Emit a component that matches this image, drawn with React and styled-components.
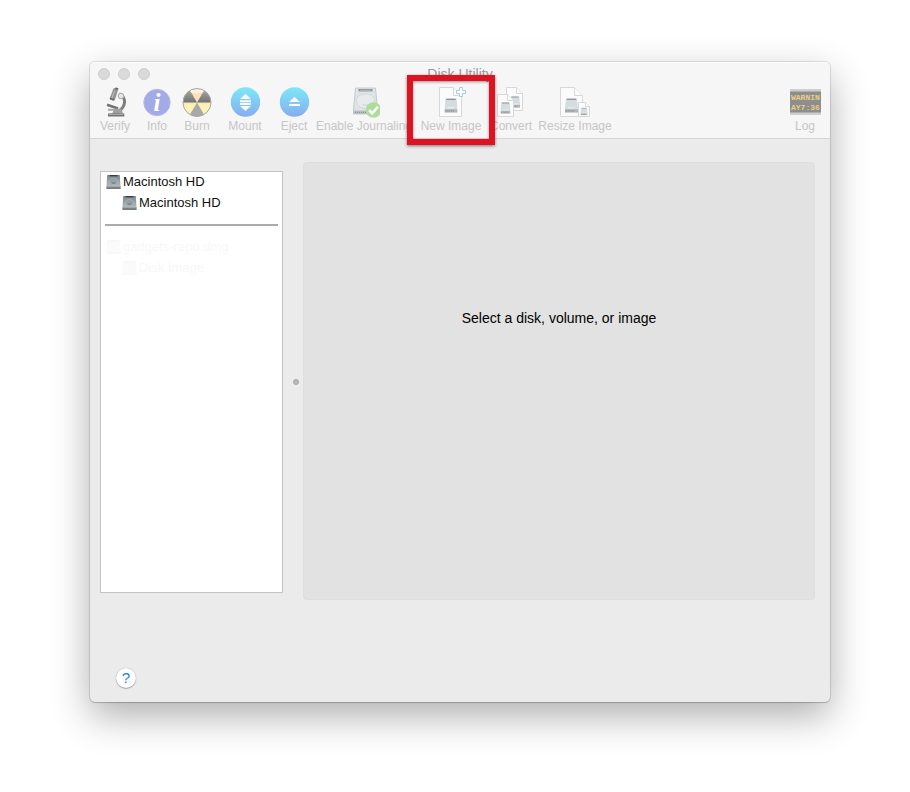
import React from "react";
import styled, { createGlobalStyle } from "styled-components";

const GlobalStyle = createGlobalStyle`
  * { box-sizing: border-box; }
  body {
    margin: 0;
    background: #fff;
    font-family: "Liberation Sans", Arial, Helvetica, sans-serif;
    color: #000;
  }
  button { font-family: inherit; }
`;

const Desktop = styled.div`
  padding: 62px 80px 90px 90px;
`;

const Window = styled.main`
  border-radius: 5px;
  background: #ebebeb;
  box-shadow: 0 0 0 1px rgba(0, 0, 0, 0.1), 0 1px 1px rgba(0, 0, 0, 0.14),
    0 14px 38px rgba(0, 0, 0, 0.32);
`;

const Header = styled.header`
  background: #f6f6f6;
  border-top: 1px solid #fcfcfc;
  border-bottom: 1px solid #d6d6d6;
  border-radius: 5px 5px 0 0;
`;

const TitleBar = styled.div`
  display: grid;
  grid-template-columns: 1fr auto 1fr;
  align-items: center;
  height: 23px;
  padding: 0 8px 2px;
`;

const Lights = styled.div`
  display: flex;
  gap: 8px;
`;

const Light = styled.button`
  width: 12px;
  height: 12px;
  padding: 0;
  border: 1px solid #cfcfcf;
  border-radius: 50%;
  background: #dadada;
`;

const Title = styled.h1`
  margin: 0;
  font-size: 14px;
  line-height: 20px;
  font-weight: 400;
  color: #9a9a9a;
`;

const Toolbar = styled.nav`
  display: flex;
  padding: 0 0 5px 4px;
`;

const Tool = styled.button`
  position: relative;
  display: flex;
  flex-direction: column;
  align-items: center;
  gap: 1px;
  flex: 0 0 ${(p) => p.$width}px;
  margin-left: ${(p) => (p.$end ? "auto" : "0")};
  padding: 0;
  border: 0;
  background: none;
  color: #c6c6c6;
  font-size: 12px;
  line-height: 14px;
  white-space: nowrap;

  svg { display: block; }
`;

const Highlight = styled.span`
  position: absolute;
  inset: -11px -7px -12px;
  z-index: 1;
  border: 6px solid #dd1322;
  box-shadow: 0 1px 3px rgba(0, 0, 0, 0.5), inset 0 1px 3px rgba(0, 0, 0, 0.4);
`;

const Content = styled.div`
  display: grid;
  grid-template-columns: 183px 20px 1fr;
  padding: 23px 15px 0 10px;
`;

const Sidebar = styled.aside`
  margin: 9px 0 7px;
  border: 1px solid #c4c4c4;
  background: #fff;
`;

const List = styled.ul`
  margin: 0;
  padding: 0 4px;
  list-style: none;
`;

const Item = styled.li`
  display: flex;
  align-items: center;
  gap: 2px;
  height: 21px;
  padding: 0 0 2px ${(p) => (p.$nested ? 17 : 1)}px;
  font-size: 13px;
  line-height: 18px;
  color: ${(p) => (p.$faded ? "#f9f7fa" : "#111")};

  svg { flex: none; opacity: ${(p) => (p.$faded ? 0.04 : 1)}; }
`;

const Divider = styled.hr`
  height: 2px;
  margin: 10px 4px 11px;
  border: 0;
  background: #ababab;
`;

const Splitter = styled.div`
  display: flex;
  align-items: center;
  justify-content: center;
  padding: 1px 0 0 5px;
`;

const Grip = styled.span`
  width: 6px;
  height: 6px;
  border: 1px solid #a8a8a8;
  border-radius: 50%;
  background: #b8b8b8;
`;

const Panel = styled.section`
  min-height: 438px;
  padding: 145px 16px 16px;
  border: 1px solid #dedede;
  border-radius: 4px;
  background: #e2e2e2;
  text-align: center;
  font-size: 14px;
  line-height: 20px;
`;

const Message = styled.p`
  margin: 0;
`;

const Footer = styled.footer`
  padding: 68px 26px 14px;
`;

const Help = styled.button`
  display: flex;
  align-items: center;
  justify-content: center;
  width: 20px;
  height: 20px;
  padding: 0;
  border: 0;
  border-radius: 50%;
  background: #fff;
  box-shadow: 0 0 1px rgba(0, 0, 0, 0.35), 0 1px 1px rgba(0, 0, 0, 0.25);
  color: #1a80f5;
  font-size: 15px;
  line-height: 20px;
`;

const PixelText = styled.text`
  font-family: "Liberation Mono", monospace;
  font-size: 8px;
  font-weight: 700;
  fill: #e6cf83;
`;

const InfoLetter = styled.text`
  font-family: "Liberation Serif", serif;
  font-size: 25px;
  font-style: italic;
  font-weight: 700;
  fill: #fff;
`;

const Verify = () => (
  <svg width="32" height="32" viewBox="0 0 32 32" fill="none" aria-hidden="true">
    <path d="M14.5 2.5l3-.9 2 1-3.8 12-5.2-1.8z" fill="#929292" />
    <path d="M15.6 5l-3 8" stroke="#c3c3c3" />
    <path d="M16.5 2.2l2.6.9" stroke="#686868" strokeWidth="1.5" />
    <path d="M11 12.4l4 1.6" stroke="#707070" strokeWidth="2" />
    <path d="M20 7.8c6 2.2 7.5 9.5 2.7 15-1.5 1.8-3.3 3-5.2 4.2" stroke="#7e7e7e" strokeWidth="3" />
    <circle cx="22" cy="10" r="2.8" fill="#e7e7e7" stroke="#a8a8a8" />
    <path d="M8 18.7l11 3.8" stroke="#747474" strokeWidth="2.5" />
    <path d="M9 23.8h8" stroke="#aaa" strokeWidth="2" />
    <path d="M15.5 22.8h7l1.5 5H13z" fill="#a0a0a0" />
    <path d="M9 27.6c5-.9 11-.9 16.3 0v2.9H9z" fill="#777" />
    <path d="M10 28.3h14" stroke="#b4b4b4" />
  </svg>
);

const Info = () => (
  <svg width="32" height="32" viewBox="0 0 32 32" aria-hidden="true">
    <circle cx="16" cy="16.5" r="13.2" fill="#a3abe6" stroke="#b5bbea" />
    <InfoLetter x="16" y="25" textAnchor="middle">i</InfoLetter>
  </svg>
);

const Burn = () => (
  <svg width="32" height="32" viewBox="0 0 32 32" aria-hidden="true">
    <defs>
      <linearGradient id="burnDark" x2="0" y2="1">
        <stop stopColor="#a4a4a4" />
        <stop offset="1" stopColor="#727272" />
      </linearGradient>
      <linearGradient id="burnLight" x2="0" y2="1">
        <stop stopColor="#f9dcb8" />
        <stop offset=".5" stopColor="#fae4b6" />
        <stop offset=".6" stopColor="#fcf3b6" />
        <stop offset="1" stopColor="#fbf0b2" />
      </linearGradient>
    </defs>
    <circle cx="16" cy="16.5" r="14" fill="url(#burnLight)" />
    <path d="M16 16.5H2A14 14 0 0 1 9 4.4zM16 16.5h14A14 14 0 0 0 23 4.4z" fill="url(#burnDark)" />
    <path d="M16 16.5l-7 12.1a14 14 0 0 0 14 0z" fill="#a9a9a9" />
    <ellipse cx="16" cy="5" rx="7" ry="2.6" fill="#fff" opacity=".55" />
    <circle cx="16" cy="16.5" r="14" fill="none" stroke="#aaa69f" />
  </svg>
);

const BlueDisc = ({ id, children }) => (
  <svg width="32" height="32" viewBox="0 0 32 32" aria-hidden="true">
    <defs>
      <linearGradient id={id} x2="0" y2="1">
        <stop stopColor="#7ce8f6" />
        <stop offset="1" stopColor="#87adef" />
      </linearGradient>
    </defs>
    <circle cx="16.5" cy="16" r="14.7" fill={`url(#${id})`} />
    <g fill="#f8fcff">{children}</g>
  </svg>
);

const Mount = () => (
  <BlueDisc id="mountFill">
    <path d="M16.5 7.8l5.4 5.2H11.1zM11 14.2h11v2H11zM11 17h11v2H11zM11.1 20h10.8l-5.4 5z" />
  </BlueDisc>
);

const Eject = () => (
  <BlueDisc id="ejectFill">
    <path d="M16.5 10.7l5.3 5.2H11.2zM11 18h11v2H11z" />
  </BlueDisc>
);

const Journal = () => (
  <svg width="32" height="32" viewBox="0 0 32 32" aria-hidden="true">
    <path d="M7.5 2h20l2 22v4h-24v-4z" fill="#dfe4e6" stroke="#c6cacc" />
    <path d="M5.5 24.5h24V28h-24z" fill="#bcc0c1" />
    <path d="M10.5 3h14v2.4h-14z" fill="#8b9193" />
    <path d="M12 4.2h11" stroke="#b9bdbf" />
    <path d="M17.5 7.8c5.6 0 9 3.2 9 7.2 0 4.2-3.7 7.4-9 7.4s-9-3.2-9-7.4c0-4 3.4-7.2 9-7.2z" fill="#e8ebec" stroke="#d3d7d9" />
    <path d="M14.5 18.5c2 1 4 1 6 0" fill="none" stroke="#cdd2d4" />
    <path d="M7 26.3h12" stroke="#84898b" strokeDasharray="1 1" />
    <circle cx="25.5" cy="24" r="7.8" fill="#b0dc9b" />
    <path d="M21.2 24.2l3 3.1 5.7-6.6" fill="none" stroke="#fff" strokeWidth="2.5" />
  </svg>
);

const MiniDrive = ({ x, y, w, h }) => (
  <svg x={x} y={y} width={w} height={h} viewBox="0 0 14 15" preserveAspectRatio="none">
    <path d="M1 .5h12l1 10.5v3.5H0V11z" fill="#d5dcdf" />
    <path d="M2 1.3h10" stroke="#8b9093" strokeWidth="1.2" />
    <path d="M3 9c2 1.2 6 1.2 8 0" fill="none" stroke="#eef1f2" />
    <path d="M0 11.3h14v3.2H0z" fill="#b2b7b9" />
    <path d="M1 12.9h10" stroke="#7b7f81" strokeDasharray="1 1" />
  </svg>
);

const Page = ({ x, y, w, h, fold }) => (
  <g fill="#fbfbfb" stroke="#d8d8d8">
    <path d={`M${x} ${y}h${w - fold}l${fold} ${fold}v${h - fold}h${-w}z`} />
    <path d={`M${x + w - fold} ${y}v${fold}h${fold}`} />
  </g>
);

const NewImage = () => (
  <svg width="32" height="32" viewBox="0 0 32 32" aria-hidden="true">
    <Page x={4.5} y={1.5} w={22} h={29} fold={8} />
    <MiniDrive x={9.5} y={12} w={13} h={15} />
    <path d="M24.5 1.5h3v3h3v3h-3v3h-3v-3h-3v-3h3z" fill="#f7fcff" stroke="#a9cbe0" />
  </svg>
);

const Convert = () => (
  <svg width="32" height="32" viewBox="0 0 32 32" aria-hidden="true">
    <Page x={11.5} y={1.5} w={16} h={23} fold={6} />
    <MiniDrive x={15} y={10} w={10} h={12} />
    <Page x={2.5} y={8.5} w={16} h={22} fold={6} />
    <MiniDrive x={5.5} y={16} w={10} h={12} />
  </svg>
);

const Resize = () => (
  <svg width="32" height="32" viewBox="0 0 32 32" aria-hidden="true">
    <Page x={1.5} y={1.5} w={22} h={29} fold={8} />
    <MiniDrive x={6} y={12} w={13} h={15} />
    <Page x={19.5} y={16.5} w={11} h={14} fold={4} />
    <MiniDrive x={21.5} y={21.5} w={7} h={8} />
  </svg>
);

const Log = () => (
  <svg width="32" height="32" viewBox="0 0 32 32" aria-hidden="true">
    <path d="M1 3h31v26H1z" fill="#cecece" />
    <path d="M1 5.5h31v21H1z" fill="#8e8e8e" />
    <PixelText x="2" y="14">WARNIN</PixelText>
    <PixelText x="2" y="24">AY7:36</PixelText>
  </svg>
);

const Drive = () => (
  <svg width="15" height="16" viewBox="0 0 15 16" aria-hidden="true">
    <defs>
      <linearGradient id="driveFill" x2="0" y2="1">
        <stop stopColor="#7c878b" />
        <stop offset="1" stopColor="#bcc5c8" />
      </linearGradient>
    </defs>
    <path d="M1.2 1h12.6l.7 11v3H.5v-3z" fill="url(#driveFill)" />
    <path d="M3.5 1.7h8" stroke="#353c3f" strokeWidth="1.3" />
    <path d="M3.5 9c-.8-2.4 1-4.4 4-4.4s4.8 2 4 4.4" fill="none" stroke="#a9b3b7" />
    <path d="M5.5 8.6c1.2.8 2.8.8 4 0" fill="none" stroke="#596266" />
    <path d="M.5 12.3h14V15H.5z" fill="#777f82" />
    <path d="M1 12.6h13" stroke="#a3abae" />
  </svg>
);

const tools = [
  { label: "Verify", width: 42, icon: Verify },
  { label: "Info", width: 42, icon: Info },
  { label: "Burn", width: 38, icon: Burn },
  { label: "Mount", width: 58, icon: Mount },
  { label: "Eject", width: 40, icon: Eject },
  { label: "Enable Journaling", width: 100, icon: Journal },
  { label: "New Image", width: 74, icon: NewImage, highlighted: true },
  { label: "Convert", width: 46, icon: Convert },
  { label: "Resize Image", width: 82, icon: Resize },
  { label: "Log", width: 50, icon: Log, end: true },
];

export default function App() {
  return (
    <>
      <GlobalStyle />
      <Desktop>
        <Window>
          <Header>
            <TitleBar>
              <Lights>
                <Light aria-label="Close" />
                <Light aria-label="Minimize" />
                <Light aria-label="Zoom" />
              </Lights>
              <Title>Disk Utility</Title>
            </TitleBar>
            <Toolbar aria-label="Toolbar">
              {tools.map(({ label, width, icon: Icon, highlighted, end }) => (
                <Tool key={label} $width={width} $end={end}>
                  <Icon />
                  {label}
                  {highlighted && <Highlight />}
                </Tool>
              ))}
            </Toolbar>
          </Header>
          <Content>
            <Sidebar aria-label="Disks">
              <List>
                <Item><Drive />Macintosh HD</Item>
                <Item $nested><Drive />Macintosh HD</Item>
              </List>
              <Divider />
              <List>
                <Item $faded><Drive />gadgets-repo.dmg</Item>
                <Item $nested $faded><Drive />Disk Image</Item>
              </List>
            </Sidebar>
            <Splitter><Grip /></Splitter>
            <Panel>
              <Message>Select a disk, volume, or image</Message>
            </Panel>
          </Content>
          <Footer>
            <Help aria-label="Help">?</Help>
          </Footer>
        </Window>
      </Desktop>
    </>
  );
}
